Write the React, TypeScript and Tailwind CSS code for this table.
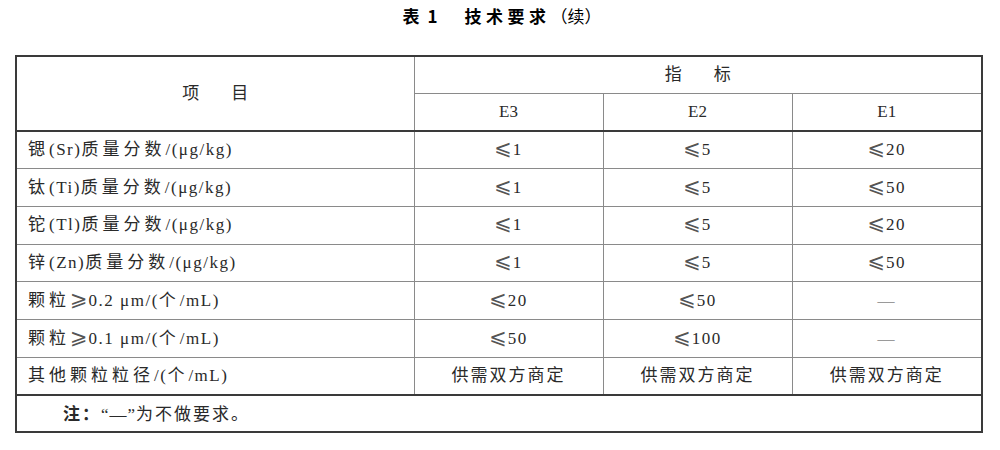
import React from "react";

const rows: [string, string, string, string][] = [
  ["锶(Sr)质量分数/(μg/kg)", "⩽1", "⩽5", "⩽20"],
  ["钛(Ti)质量分数/(μg/kg)", "⩽1", "⩽5", "⩽50"],
  ["铊(Tl)质量分数/(μg/kg)", "⩽1", "⩽5", "⩽20"],
  ["锌(Zn)质量分数/(μg/kg)", "⩽1", "⩽5", "⩽50"],
  ["颗粒⩾0.2 μm/(个/mL)", "⩽20", "⩽50", "—"],
  ["颗粒⩾0.1 μm/(个/mL)", "⩽50", "⩽100", "—"],
  ["其他颗粒粒径/(个/mL)", "供需双方商定", "供需双方商定", "供需双方商定"],
];

const font = {
  fontFamily:
    '"Liberation Serif", "DejaVu Serif", "DejaVu Sans", "Noto Sans CJK SC", serif',
};

function Txt({ s, wide }: { s: string; wide?: boolean }) {
  const parts = s
    .split(/([\u4e00-\u9fff\u3000-\u303f\uff00-\uffef]+|[⩽⩾])/)
    .filter((p) => p !== "");
  return (
    <>
      {parts.map((p, i) => {
        if (p === "⩽" || p === "⩾")
          return (
            <span
              key={i}
              className="text-[21px] leading-none mr-[1px] tracking-normal text-[#555]"
            >
              {p}
            </span>
          );
        if (/[\u4e00-\u9fff\u3000-\u303f\uff00-\uffef]/.test(p))
          return (
            <span key={i} className={wide ? "tracking-[4px]" : "tracking-[2px]"}>
              {p}
            </span>
          );
        return (
          <span key={i} className="tracking-[1.5px]">
            {p}
          </span>
        );
      })}
    </>
  );
}

export default function App() {
  return (
    <div className="w-[1000px] h-[450px] bg-white text-[#2a2a2a]" style={font}>
      <div
        className="h-[31px] flex items-center justify-center text-[17px] text-black pl-[4px]"
        style={{ fontFamily: '"Noto Sans CJK SC", sans-serif' }}
      >
        <span className="font-bold">表</span>
        <span className="font-bold ml-[8px]">1</span>
        <span className="font-bold ml-[27px] tracking-[4.5px]">技术要求</span>
        <span className="font-normal">（续）</span>
      </div>
      <table className="mt-[24px] ml-[15px] w-[966px] table-fixed border-collapse border-2 border-[#3a3a3a] text-[17px]">
        <colgroup>
          <col className="w-[398px]" />
          <col className="w-[189px]" />
          <col className="w-[189px]" />
          <col className="w-[190px]" />
        </colgroup>
        <tbody>
          <tr className="h-[37.5px]">
            <td
              rowSpan={2}
              className="border-r border-[#8a8a8a] text-center align-middle p-0"
            >
              项<span className="inline-block w-[32px]"></span>目
            </td>
            <td
              colSpan={3}
              className="border-b border-[#8a8a8a] text-center align-middle p-0"
            >
              指<span className="inline-block w-[32px]"></span>标
            </td>
          </tr>
          <tr className="h-[37.5px]">
            <td className="border-r border-[#8a8a8a] text-center p-0">E3</td>
            <td className="border-r border-[#8a8a8a] text-center p-0">E2</td>
            <td className="text-center p-0">E1</td>
          </tr>
          {rows.map((r, i) => (
            <tr
              key={i}
              className={
                i === 0
                  ? "h-[37.7px] border-t-2 border-[#3a3a3a]"
                  : "h-[37.7px] border-t border-[#8a8a8a]"
              }
            >
              <td className="border-r border-[#8a8a8a] pl-[11px] p-0 whitespace-nowrap">
                <Txt s={r[0]} wide />
              </td>
              <td className="border-r border-[#8a8a8a] text-center p-0 whitespace-nowrap">
                <Txt s={r[1]} />
              </td>
              <td className="border-r border-[#8a8a8a] text-center p-0 whitespace-nowrap">
                <Txt s={r[2]} />
              </td>
              <td
                className={
                  r[3] === "—"
                    ? "text-center p-0 text-[#9a9a9a]"
                    : "text-center p-0 whitespace-nowrap"
                }
              >
                <Txt s={r[3]} />
              </td>
            </tr>
          ))}
          <tr className="h-[37px] border-t-2 border-[#3a3a3a]">
            <td colSpan={4} className="pl-[46px] p-0 whitespace-nowrap">
              <span
                className="font-bold tracking-[2px]"
                style={{ fontFamily: '"Noto Sans CJK SC", sans-serif' }}
              >
                注：
              </span>
              <span className="tracking-[1px]">“—”</span>
              <span className="tracking-[2px]">为不做要求。</span>
            </td>
          </tr>
        </tbody>
      </table>
    </div>
  );
}
